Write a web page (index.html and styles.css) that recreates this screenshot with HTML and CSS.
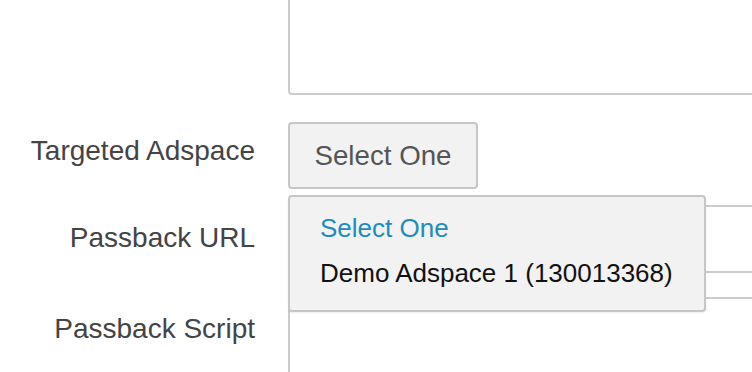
FILE: index.html
```html
<!DOCTYPE html>
<html lang="en">
<head>
    <meta charset="utf-8">
    <meta name="viewport" content="width=device-width, initial-scale=1">
    <title>Passback Settings</title>
    <link rel="stylesheet" href="styles.css">
</head>
<body>
    <form class="form">
        <div class="row row-notes">
            <label class="label"></label>
            <textarea class="field notes"></textarea>
        </div>
        <div class="row row-adspace">
            <label class="label">Targeted Adspace</label>
            <div class="select-wrap">
                <button type="button" class="select-btn">Select One</button>
                <ul class="menu">
                    <li class="option active">Select One</li>
                    <li class="option">Demo Adspace 1 (130013368)</li>
                </ul>
            </div>
        </div>
        <div class="row row-url">
            <label class="label">Passback URL</label>
            <input type="text" class="field url">
        </div>
        <div class="row row-script">
            <label class="label">Passback Script</label>
            <textarea class="field script"></textarea>
        </div>
    </form>
</body>
</html>
```

FILE: styles.css
```css
html, body {
    margin: 0;
    padding: 0;
    background: #fff;
    overflow: hidden;
    height: 372px;
}
body {
    font-family: "Liberation Sans", Arial, sans-serif;
    color: #444;
}
.form {
    margin-top: -45px;
}
.row {
    display: grid;
    grid-template-columns: 255px 600px;
    column-gap: 33px;
    align-items: start;
}
.label {
    text-align: right;
    font-size: 28px;
    color: #444;
}
.field {
    box-sizing: border-box;
    border: 2px solid #ccc;
    border-radius: 4px;
    background: #fff;
    margin: 0;
    font: inherit;
}
.notes {
    height: 140px;
    resize: none;
}
.row-adspace {
    margin-top: 27px;
    position: relative;
    z-index: 2;
}
.row-adspace .label {
    padding-top: 12.7px;
}
.select-wrap {
    position: relative;
}
.select-btn {
    display: block;
    box-sizing: border-box;
    width: 190px;
    height: 67px;
    margin: 0;
    padding: 0;
    border: 2px solid #c6c6c6;
    border-radius: 4px;
    background: #f2f2f2;
    color: #555;
    font-family: "Liberation Sans", Arial, sans-serif;
    font-size: 27.7px;
    text-align: center;
}
.menu {
    position: absolute;
    top: 73px;
    left: 0;
    box-sizing: border-box;
    width: 418px;
    height: 117px;
    margin: 0;
    padding: 9px 0 0 30px;
    list-style: none;
    background: #f2f2f2;
    border: 2px solid #c6c6c6;
    border-radius: 4px;
    box-shadow: 0 1px 2px rgba(0, 0, 0, 0.08);
}
.option {
    height: 45px;
    line-height: 45px;
    font-size: 26px;
    color: #111;
    white-space: nowrap;
}
.option.active {
    color: #1f8cc0;
}
.row-url {
    margin-top: 16px;
}
.row-url .label {
    padding-top: 16.7px;
}
.url {
    height: 68px;
}
.row-script {
    margin-top: 24px;
}
.row-script .label {
    padding-top: 15.7px;
}
.script {
    height: 160px;
    resize: none;
}
```
